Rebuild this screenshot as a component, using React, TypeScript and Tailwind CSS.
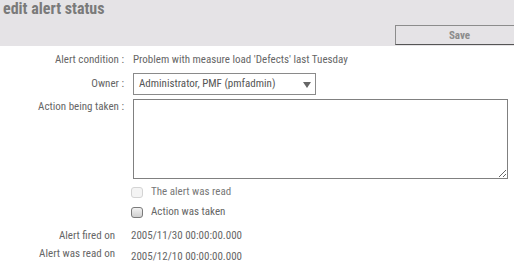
import React, { useState } from 'react';

const font = { fontFamily: '"Roboto Condensed", Roboto, "Liberation Sans", sans-serif' };

const Label = ({ children, w = 'w-[124px]' }) => (
  <div className={`${w} shrink-0 text-right`}>{children}</div>
);

export default function App() {
  const [taken, setTaken] = useState(false);

  return (
    <div className="w-[514px] h-[264px] overflow-hidden bg-white text-[11px] leading-[14px] text-[#666]" style={font}>
      {/* Header bar */}
      <div className="h-[46px] bg-[#e5e3e6] flex flex-col">
        <h1 className="pl-[3px] text-[16px] font-bold text-[#7a7a7a] leading-[17px]">edit alert status</h1>
        <button className="self-end mr-[-10px] mt-[8px] w-[129px] h-[20px] border border-[#8c8c8c] border-b-[#555] bg-[#e5e3e6] text-[11px] font-bold text-[#8c8c8c] leading-none">
          Save
        </button>
      </div>

      <div className="flex flex-col">
        <div className="mt-[7px] flex">
          <Label>Alert condition :</Label>
          <div className="pl-[9px]">Problem with measure load 'Defects' last Tuesday</div>
        </div>

        <div className="mt-[6px] flex items-center">
          <Label>Owner :</Label>
          <div className="ml-[9px] w-[183px] h-[22px] border border-[#8a8a8a] flex items-center justify-between pl-[5px] pr-[4px] text-[#555]">
            <span>Administrator, PMF (pmfadmin)</span>
            <svg width="8" height="6" viewBox="0 0 8 6" className="mt-[1px]">
              <path d="M0 0 H8 L4 6 Z" fill="#666" />
            </svg>
          </div>
        </div>

        <div className="mt-[4px] flex items-start">
          <div className="mt-[1px]">
            <Label>Action being taken :</Label>
          </div>
          <textarea className="ml-[9px] block w-[375px] h-[80px] border border-[#808080] bg-white outline-none resize" />
        </div>

        <div className="mt-[6px] pl-[131px] flex flex-col gap-[6px]">
          <label className="flex items-center gap-[8px] text-[#777]">
            <span className="w-[12px] h-[11px] rounded-[3px] border border-[#d4d4d4] bg-[#f4f4f4]" />
            The alert was read
          </label>
          <label className="flex items-center gap-[8px]" onClick={() => setTaken(!taken)}>
            <span className="w-[12px] h-[11px] rounded-[3px] border border-[#7a7a7a] bg-gradient-to-b from-[#f2f2f2] to-[#cfcfcf] flex items-center justify-center text-[9px] leading-none text-[#444]">
              {taken ? '✓' : ''}
            </span>
            Action was taken
          </label>
        </div>

        <div className="mt-[10px] flex flex-col gap-[4px]">
          <div className="flex">
            <Label w="w-[115px]">Alert fired on</Label>
            <div className="pl-[16px]">2005/11/30 00:00:00.000</div>
          </div>
          <div className="flex">
            <Label w="w-[115px]">Alert was read on</Label>
            <div className="pl-[16px] pt-[3px]">2005/12/10 00:00:00.000</div>
          </div>
        </div>
      </div>
    </div>
  );
}
